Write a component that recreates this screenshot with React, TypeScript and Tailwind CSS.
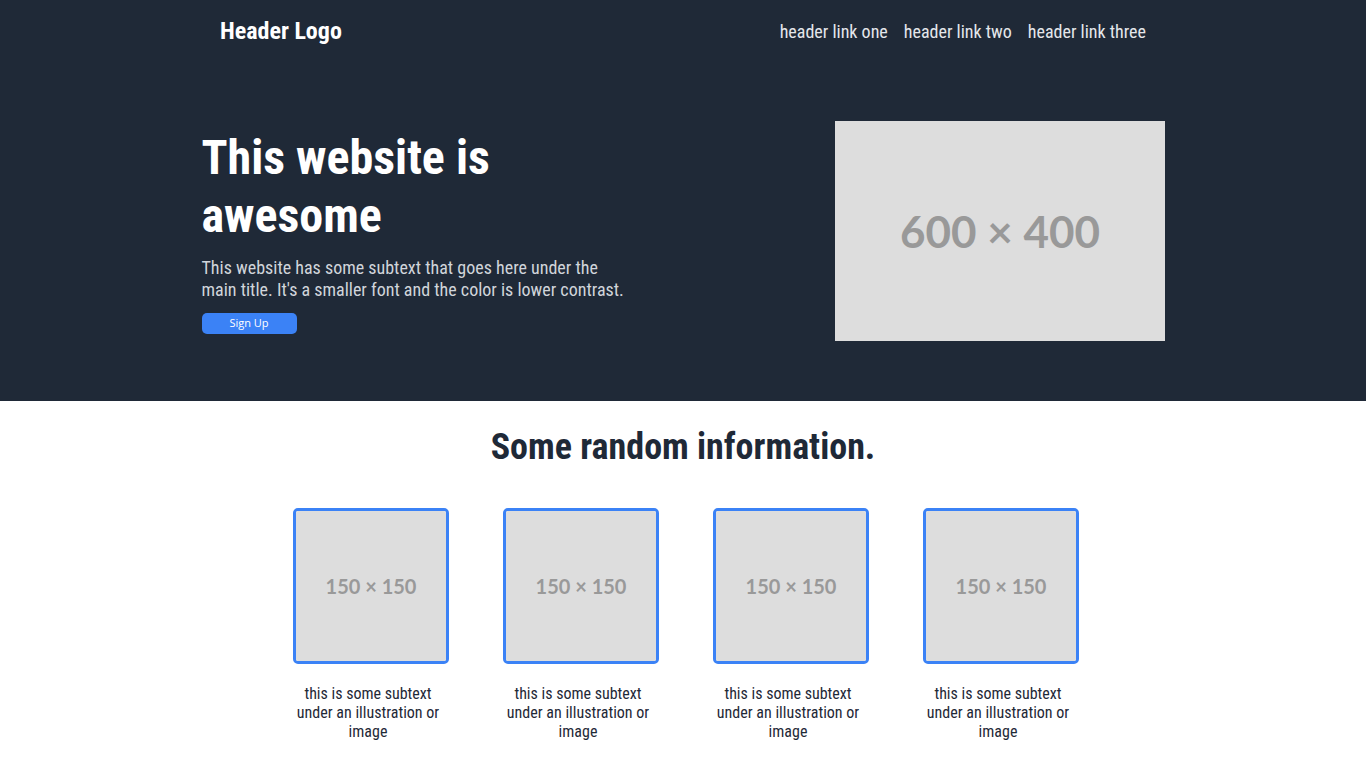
import React from "react";

const cond = { fontFamily: "'Roboto Condensed', Roboto, sans-serif" };

function Placeholder({ label, className }: { label: string; className: string }) {
  return (
    <div
      className={`flex items-center justify-center bg-[#dddddd] text-[#999999] font-bold ${className}`}
      style={{ fontFamily: "Lato, sans-serif" }}
    >
      {label}
    </div>
  );
}

export default function App() {
  const links = ["header link one", "header link two", "header link three"];
  return (
    <div className="min-h-screen bg-white" style={cond}>
      <div className="bg-[#1f2937] h-[401px] flex flex-col">
        <header className="w-[960px] mx-auto h-[62px] px-[17px] flex items-center justify-between">
          <div className="text-[24px] font-bold text-white">Header Logo</div>
          <nav className="flex items-center gap-4">
            {links.map((l) => (
              <a key={l} className="text-[18px] text-[#e5e7eb]">
                {l}
              </a>
            ))}
          </nav>
        </header>
        <div className="w-[964px] mx-auto flex-1 flex items-center justify-between pb-px">
          <div className="w-[431px] pl-[0.5px] pt-px flex flex-col items-start">
            <h1 className="text-[48px] font-bold leading-[58px] text-white">This website is awesome</h1>
            <p className="mt-3 text-[18px] leading-[22px] text-[#d1d5db]">
              This website has some subtext that goes here under the main title. It's a smaller font and the color is lower contrast.
            </p>
            <button
              className="mt-3 w-[95px] h-[21px] rounded-[5px] bg-[#3b82f6] text-white text-[11px] flex items-center justify-center"
              style={{ fontFamily: "'Open Sans', sans-serif" }}
            >
              Sign Up
            </button>
          </div>
          <Placeholder label="600 × 400" className="w-[330px] h-[220px] text-[44px]" />
        </div>
      </div>
      <section className="pt-[24px] pb-8">
        <h2 className="text-center text-[36px] leading-[44px] font-bold text-[#1f2937]">Some random information.</h2>
        <div className="mt-[39px] flex justify-center gap-[60px]">
          {[0, 1, 2, 3].map((i) => (
            <div key={i} className="w-[150px] flex flex-col">
              <div className="w-[156px] h-[156px] border-[3px] border-[#3b82f6] rounded-[5px] overflow-hidden">
                <Placeholder label="150 × 150" className="w-full h-full text-[20px]" />
              </div>
              <p className="mt-[20px] text-center text-[16px] leading-[19px] text-[#1f2937]">
                this is some subtext under an illustration or image
              </p>
            </div>
          ))}
        </div>
      </section>
    </div>
  );
}
